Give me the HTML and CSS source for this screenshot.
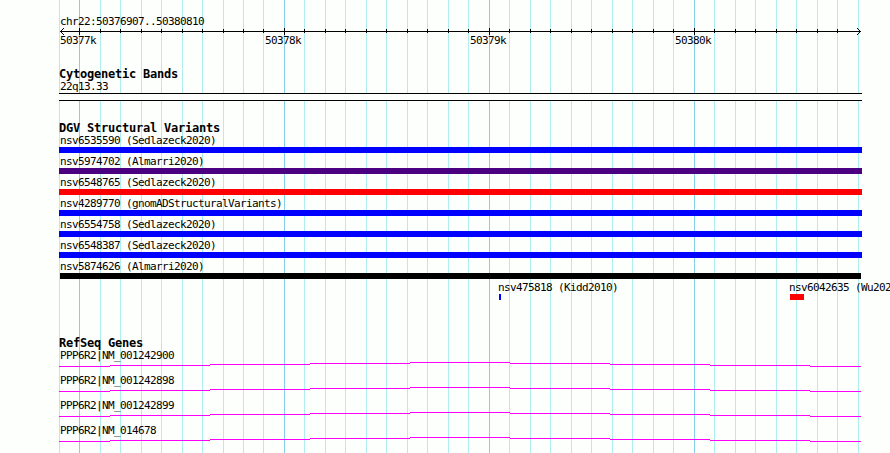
FILE: index.html
```html
<!DOCTYPE html>
<html lang="en">
<head>
<meta charset="utf-8">
<title>chr22:50376907..50380810</title>
<link rel="stylesheet" href="styles.css">
</head>
<body>
<main class="browser">
  <svg class="grid" width="890" height="453" shape-rendering="crispEdges" aria-hidden="true">
    <path class="minor" d="M59.5 0v453M100.5 0v453M120.5 0v453M141.5 0v453M161.5 0v453M182.5 0v453M202.5 0v453M223.5 0v453M243.5 0v453M263.5 0v453M304.5 0v453M325.5 0v453M345.5 0v453M366.5 0v453M386.5 0v453M407.5 0v453M427.5 0v453M448.5 0v453M468.5 0v453M509.5 0v453M530.5 0v453M550.5 0v453M571.5 0v453M591.5 0v453M612.5 0v453M632.5 0v453M653.5 0v453M673.5 0v453M714.5 0v453M735.5 0v453M755.5 0v453M776.5 0v453M796.5 0v453M817.5 0v453M837.5 0v453M858.5 0v453"/>
    <path class="major" d="M79.5 0v453M284.5 0v453M489.5 0v453M694.5 0v453"/>
  </svg>

  <section class="ruler">
    <div class="label">chr22:50376907..50380810</div>
    <svg class="axis" width="803" height="7" shape-rendering="crispEdges" aria-hidden="true">
      <path d="M1 3.5H802M20.5 0v7M225.5 0v7M430.5 0v7M635.5 0v7"/>
      <path d="M41.5 1v4M61.5 1v4M82.5 1v4M102.5 1v4M123.5 1v4M143.5 1v4M164.5 1v4M184.5 1v4M204.5 1v4M245.5 1v4M266.5 1v4M286.5 1v4M307.5 1v4M327.5 1v4M348.5 1v4M368.5 1v4M389.5 1v4M409.5 1v4M450.5 1v4M471.5 1v4M491.5 1v4M512.5 1v4M532.5 1v4M553.5 1v4M573.5 1v4M594.5 1v4M614.5 1v4M655.5 1v4M676.5 1v4M696.5 1v4M717.5 1v4M737.5 1v4M758.5 1v4M778.5 1v4"/>
      <path d="M2 2.5h1M3 1.5h1M4 0.5h1M2 4.5h1M3 5.5h1M4 6.5h1M800 2.5h1M799 1.5h1M798 0.5h1M800 4.5h1M799 5.5h1M798 6.5h1"/>
    </svg>
    <div class="ticks"><span class="label">50377k</span><span class="label">50378k</span><span class="label">50379k</span><span class="label">50380k</span></div>
  </section>

  <section class="cyto">
    <h2>Cytogenetic Bands</h2>
    <div class="label">22q13.33</div>
    <div class="band"></div>
  </section>

  <section class="variants">
    <h2>DGV Structural Variants</h2>
    <div class="variant blue"><div class="label">nsv6535590 (Sedlazeck2020)</div><div class="bar"></div></div>
    <div class="variant purple"><div class="label">nsv5974702 (Almarri2020)</div><div class="bar"></div></div>
    <div class="variant red"><div class="label">nsv6548765 (Sedlazeck2020)</div><div class="bar"></div></div>
    <div class="variant blue"><div class="label">nsv4289770 (gnomADStructuralVariants)</div><div class="bar"></div></div>
    <div class="variant blue"><div class="label">nsv6554758 (Sedlazeck2020)</div><div class="bar"></div></div>
    <div class="variant blue"><div class="label">nsv6548387 (Sedlazeck2020)</div><div class="bar"></div></div>
    <div class="variant black"><div class="label">nsv5874626 (Almarri2020)</div><div class="bar"></div></div>
    <div class="short-row">
      <div class="variant blue kidd"><div class="label">nsv475818 (Kidd2010)</div><div class="bar"></div></div>
      <div class="variant red wu"><div class="label">nsv6042635 (Wu2020)</div><div class="bar"></div></div>
    </div>
  </section>

  <svg width="0" height="0" class="defs" aria-hidden="true">
    <symbol id="intron" viewBox="0 0 803 5"><path d="M0 4.5H51M51 3.5H151M151 2.5H251M251 1.5H351M351 0.5H451M451 1.5H551M551 2.5H651M651 3.5H751M751 4.5H802"/></symbol>
  </svg>
  <section class="genes">
    <h2>RefSeq Genes</h2>
    <div class="gene"><div class="label">PPP6R2|NM_001242900</div><svg class="intron" width="803" height="5"><use href="#intron"/></svg></div>
    <div class="gene"><div class="label">PPP6R2|NM_001242898</div><svg class="intron" width="803" height="5"><use href="#intron"/></svg></div>
    <div class="gene"><div class="label">PPP6R2|NM_001242899</div><svg class="intron" width="803" height="5"><use href="#intron"/></svg></div>
    <div class="gene"><div class="label">PPP6R2|NM_014678</div><svg class="intron" width="803" height="5"><use href="#intron"/></svg></div>
  </section>
</main>
</body>
</html>
```
FILE: styles.css
```css
* { box-sizing: border-box; }
body { margin: 0; background: #fdfffc; color: #000; }
.browser {
  position: relative;
  width: 890px;
  height: 453px;
  padding: 15px 0 0 59px;
  overflow: hidden;
  font-family: "DejaVu Sans Mono", monospace;
}
.browser > section { position: relative; width: 803px; }
svg { display: block; }
.grid { position: absolute; left: 0; top: 0; }
.grid path { fill: none; stroke-width: 1; }
.grid .minor { stroke: #afeeee; }
.grid .major { stroke: #87ceeb; }
.defs { position: absolute; }

.label {
  height: 13px;
  padding-left: 1px;
  font-size: 11px;
  line-height: 13px;
  letter-spacing: -0.6225px;
  white-space: pre;
}
h2 {
  height: 12px;
  margin: 0;
  font-size: 12px;
  line-height: 13px;
  font-weight: bold;
  letter-spacing: -0.2246px;
  white-space: pre;
}

.ruler { height: 53px; }
.axis path { fill: none; stroke: #000; }
.ticks { display: flex; margin-top: -1px; }
.ticks .label { flex: none; width: 205px; }

.cyto { height: 54px; }
.band { height: 8px; border: solid #000; border-width: 1px 0; background: #fdfffc; }

.variants { height: 215px; }
.variant { height: 21px; }
.variant .bar { height: 6px; background: currentColor; }
.variant .label { color: #000; }
.variant.blue { color: #00f; }
.variant.purple { color: #4b0082; }
.variant.red { color: #f00; }
.variant.black { color: #000; }
.black .bar { margin: 0 1px; }
.short-row { display: flex; padding-left: 439px; }
.short-row .variant { flex: none; }
.short-row .label { padding-left: 0; }
.short-row .bar { margin-left: 1px; }
.kidd { width: 291px; }
.kidd .bar { width: 2px; }
.wu .bar { width: 14px; }

.gene { height: 25px; }
.gene .intron { margin-top: -1px; }
#intron path { fill: none; stroke: #f0f; shape-rendering: crispEdges; }
.genes h2 { margin-bottom: 0; }
.gene .label { height: 14px; }
```
